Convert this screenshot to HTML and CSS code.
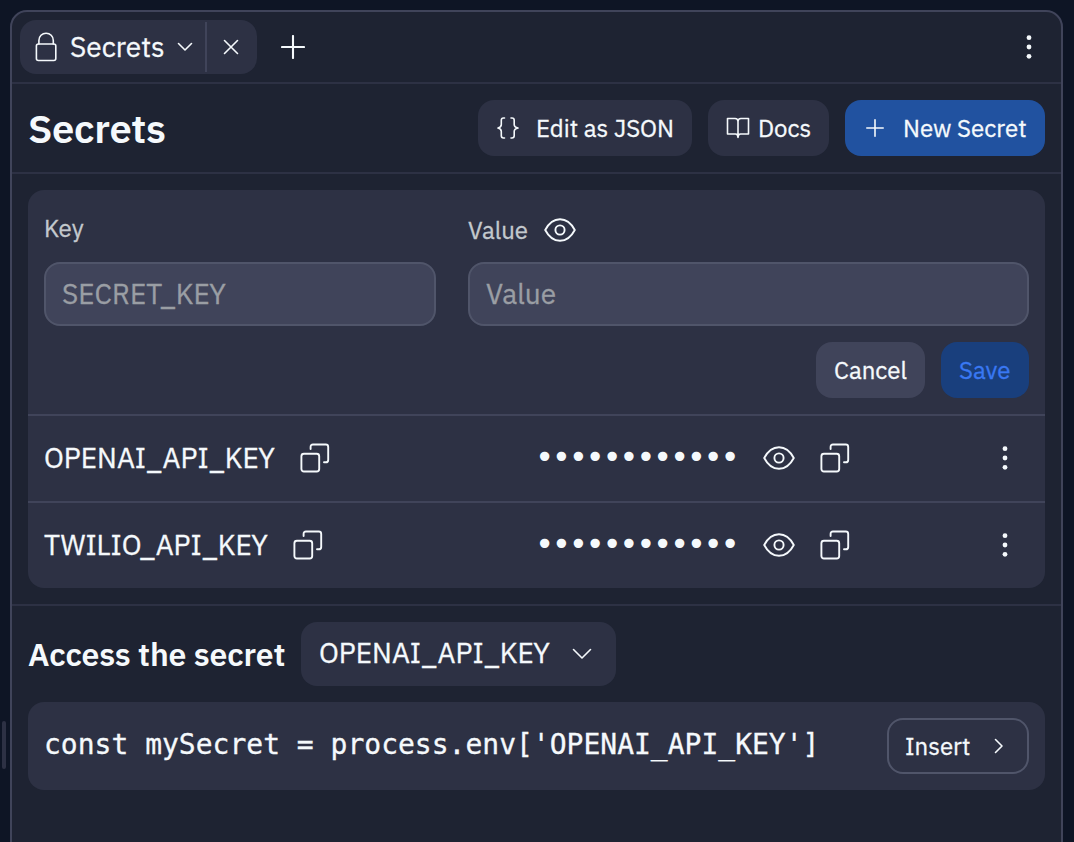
FILE: index.html
```html
<!DOCTYPE html>
<html lang="en">
<head>
<meta charset="utf-8">
<title>Secrets</title>
<link rel="stylesheet" href="styles.css">
</head>
<body>
<svg class="defs" width="0" height="0">
  <symbol id="eye" viewBox="0 0 32 24"><path d="M1.200 12C4.200 6.300 9.500 1.200 16 1.200S27.800 6.300 30.800 12C27.800 17.700 22.500 22.800 16 22.800S4.200 17.700 1.200 12Z"/><circle cx="16" cy="12" r="4.600"/></symbol>
  <symbol id="copy" viewBox="0 0 30 30"><rect x="1.400" y="10.700" width="17.800" height="17.800" rx="2.500"/><path d="M10.600 6V3.900Q10.600 1.500 13 1.500H25.800Q28.200 1.500 28.200 3.900V16.900Q28.200 19.300 25.800 19.300H24"/></symbol>
  <symbol id="dots" viewBox="0 0 6 24"><circle cx="3" cy="2.700" r="2.400"/><circle cx="3" cy="12" r="2.400"/><circle cx="3" cy="21.300" r="2.400"/></symbol>
</svg>
<div class="resize-handle"></div>
<main class="panel">
  <nav class="tabbar">
    <div class="tab">
      <div class="tab-main">
        <svg class="lock" width="24" height="30" viewBox="0 0 24 30"><rect x="2.400" y="12" width="19.400" height="16.500" rx="2"/><path d="M4.900 12V8.400A7.200 7.200 0 0 1 19.300 8.400V12"/></svg>
        <span class="tab-label">Secrets</span>
        <svg class="tab-chevron" width="16" height="10" viewBox="0 0 16 10"><path d="M1.500 1.500 8 8 14.500 1.500"/></svg>
      </div>
      <div class="tab-close"><svg width="16" height="16" viewBox="0 0 16 16"><path d="M1.500 1.500 14.500 14.500M14.500 1.500 1.500 14.500"/></svg></div>
    </div>
    <svg class="add" width="24" height="24" viewBox="0 0 24 24"><path d="M12 1V23M1 12H23"/></svg>
    <svg class="kebab" width="6" height="24"><use href="#dots"/></svg>
  </nav>
  <header class="header">
    <h1 class="title">Secrets</h1>
    <button class="btn btn-json"><svg width="22" height="22" viewBox="0 0 22 22"><path d="M7.500 1H6.500Q4.300 1 4.300 3.200V7.500Q4.300 10.200 1 11Q4.300 11.800 4.300 14.500V18.800Q4.300 21 6.500 21H7.500M14 1H15Q17.200 1 17.200 3.200V7.500Q17.200 10.200 21 11Q17.200 11.800 17.200 14.500V18.800Q17.200 21 15 21H14"/></svg><span>Edit as JSON</span></button>
    <button class="btn btn-docs"><svg width="24" height="22" viewBox="0 0 24 22"><path d="M12 4.500Q12 1.500 9 1.500H1.500V17H9.500Q12 17 12 20.500Q12 17 14.500 17H22.500V1.500H15Q12 1.500 12 4.500V18.500"/></svg><span>Docs</span></button>
    <button class="btn btn-new"><svg width="18" height="18" viewBox="0 0 18 18"><path d="M9 .8V17.200M.8 9H17.200"/></svg><span>New Secret</span></button>
  </header>
  <section class="secrets">
    <div class="card">
      <form class="form">
        <div class="field">
          <label class="label label-key" for="key">Key</label>
          <input class="input" id="key" placeholder="SECRET_KEY">
        </div>
        <div class="field">
          <label class="label" for="value"><span>Value</span><svg class="icon" width="32" height="24"><use href="#eye"/></svg></label>
          <input class="input" id="value" placeholder="Value">
        </div>
        <div class="actions">
          <button type="button" class="btn btn-cancel"><span>Cancel</span></button>
          <button type="button" class="btn btn-save"><span>Save</span></button>
        </div>
      </form>
      <div class="row">
        <div class="row-key"><span>OPENAI_API_KEY</span><svg class="icon" width="30" height="30"><use href="#copy"/></svg></div>
        <span class="masked">••••••••••••</span>
        <svg class="icon row-eye" width="32" height="24"><use href="#eye"/></svg>
        <svg class="icon" width="30" height="30"><use href="#copy"/></svg>
        <svg class="kebab" width="6" height="24"><use href="#dots"/></svg>
      </div>
      <div class="row">
        <div class="row-key"><span>TWILIO_API_KEY</span><svg class="icon" width="30" height="30"><use href="#copy"/></svg></div>
        <span class="masked">••••••••••••</span>
        <svg class="icon row-eye" width="32" height="24"><use href="#eye"/></svg>
        <svg class="icon" width="30" height="30"><use href="#copy"/></svg>
        <svg class="kebab" width="6" height="24"><use href="#dots"/></svg>
      </div>
    </div>
  </section>
  <section class="access">
    <div class="access-head">
      <h2 class="subtitle">Access the secret</h2>
      <div class="select"><span>OPENAI_API_KEY</span><svg width="20" height="12" viewBox="0 0 20 12"><path d="M1.500 1.500 10 10 18.500 1.500"/></svg></div>
    </div>
    <div class="snippet">
      <code class="code">const mySecret = process.env['OPENAI_API_KEY']</code>
      <button class="btn btn-insert"><span>Insert</span><svg width="10" height="16" viewBox="0 0 10 16"><path d="M1.500 1.500 8 8 1.500 14.500"/></svg></button>
    </div>
  </section>
</main>
</body>
</html>
```

FILE: styles.css
```css
* { box-sizing: border-box; }
body {
  margin: 0;
  height: 842px;
  padding: 10px 11px 0 10px;
  overflow: hidden;
  background: #0e1525;
  color: #f5f9fc;
  font-family: "IBM Plex Sans", "Noto Sans", sans-serif;
}
.defs { position: absolute; }
svg { flex: none; display: block; fill: none; stroke: currentColor; stroke-width: 1.6; stroke-linecap: round; stroke-linejoin: round; }
.icon { stroke-width: 1.9; }
.resize-handle { position: absolute; left: 2px; top: 721px; width: 4px; height: 48px; border-radius: 2px; background: #2d3144; }
.panel { height: 860px; border: 2px solid #40445a; border-radius: 17px; background: #1e2332; }
.tabbar { display: flex; align-items: center; height: 72px; padding: 0 29px 0 8px; border-bottom: 2px solid #2d3144; }
.tab { display: flex; align-items: center; height: 54px; border-radius: 16px; background: #2d3144; }
.tab-main { display: flex; align-items: center; width: 187px; height: 50px; padding-left: 14px; border-right: 2px solid #40445a; }
.tab-label { width: 95px; margin-left: 12px; font-size: 28px; line-height: 36px; -webkit-text-stroke: 0.3px; }
.tab-chevron { margin-left: 12px; }
.tab-close { display: flex; width: 50px; padding-left: 16px; }
.add { margin-left: 24px; stroke-width: 2.1; }
.kebab { margin-left: auto; fill: currentColor; stroke: none; }
.header { display: flex; align-items: center; gap: 16px; height: 90px; padding: 0 16px; border-bottom: 2px solid #2d3144; }
.title { margin: 0 auto 0 0; font-size: 40px; font-weight: 600; line-height: 48px; letter-spacing: -0.35px; }
.btn { display: flex; align-items: center; height: 56px; margin: 0; padding: 0 18px; border: 0; border-radius: 16px; background: #2d3144; color: inherit; font: 400 24px/32px "IBM Plex Sans", "Noto Sans", sans-serif; -webkit-text-stroke: 0.3px; white-space: nowrap; }
.btn-json { width: 214px; padding-left: 19px; }
.btn-json span { margin-left: 17px; }
.btn-docs { width: 121px; }
.btn-docs span { margin-left: 8px; }
.btn-new { width: 200px; padding-left: 21px; background: #2152a0; }
.btn-new span { margin-left: 19px; }
.secrets { padding: 16px; border-bottom: 2px solid #2d3144; }
.card { overflow: hidden; border-radius: 16px; background: #2d3144; }
.form { display: grid; grid-template-columns: 392px 561px; column-gap: 32px; row-gap: 16px; height: 224px; padding: 16px; }
.label { display: flex; align-items: center; height: 48px; gap: 16px; color: #c3c8cd; font-size: 24px; line-height: 32px; -webkit-text-stroke: 0.3px; }
.label-key { padding-bottom: 4px; }
.label .icon { color: #f5f9fc; }
.field { height: 120px; }
.input { display: block; width: 100%; height: 64px; margin-top: 8px; padding: 0 16px 2px; border: 2px solid #50556a; border-radius: 16px; background: #40445a; color: #f5f9fc; font: 28px/36px "IBM Plex Sans", "Noto Sans", sans-serif; -webkit-text-stroke: 0.3px; }
.input::placeholder { color: #9a9ea4; opacity: 1; }
.actions { grid-column: 1 / -1; display: flex; justify-content: flex-end; gap: 16px; }
.btn-cancel { width: 109px; background: #40445a; }
.btn-save { width: 88px; background: #193f7d; color: #3978f3; }
.row { display: flex; align-items: center; height: 87px; padding: 0 37px 2px 16px; border-top: 2px solid #40445a; }
.row-key { display: flex; align-items: center; gap: 25px; width: 492px; font-size: 28px; line-height: 36px; -webkit-text-stroke: 0.3px; }
.masked { width: 203px; margin-left: -1px; padding-bottom: 2px; font: 32px/36px "DejaVu Sans Mono", monospace; letter-spacing: -2.405px; }
.row-eye { margin: 0 25px; }
.access { padding: 16px; }
.access-head { display: flex; gap: 16px; align-items: center; margin-bottom: 16px; }
.subtitle { width: 257px; margin: 0; font-size: 32px; font-weight: 600; line-height: 40px; letter-spacing: -0.15px; white-space: nowrap; }
.select { display: flex; align-items: center; justify-content: space-between; width: 315px; height: 64px; padding: 0 24px 0 18px; border-radius: 16px; background: #2d3144; font-size: 28px; line-height: 36px; -webkit-text-stroke: 0.3px; }
.select span { padding-bottom: 2px; }
.snippet { display: flex; align-items: center; justify-content: space-between; height: 88px; padding: 0 16px; border-radius: 16px; background: #2d3144; }
.code { padding-bottom: 2px; font: 28px/36px "DejaVu Sans Mono", monospace; white-space: pre; -webkit-text-stroke: 0.3px; }
.btn-insert { width: 142px; padding: 0 23px 0 16px; justify-content: space-between; border: 2px solid #50556a; }
```
